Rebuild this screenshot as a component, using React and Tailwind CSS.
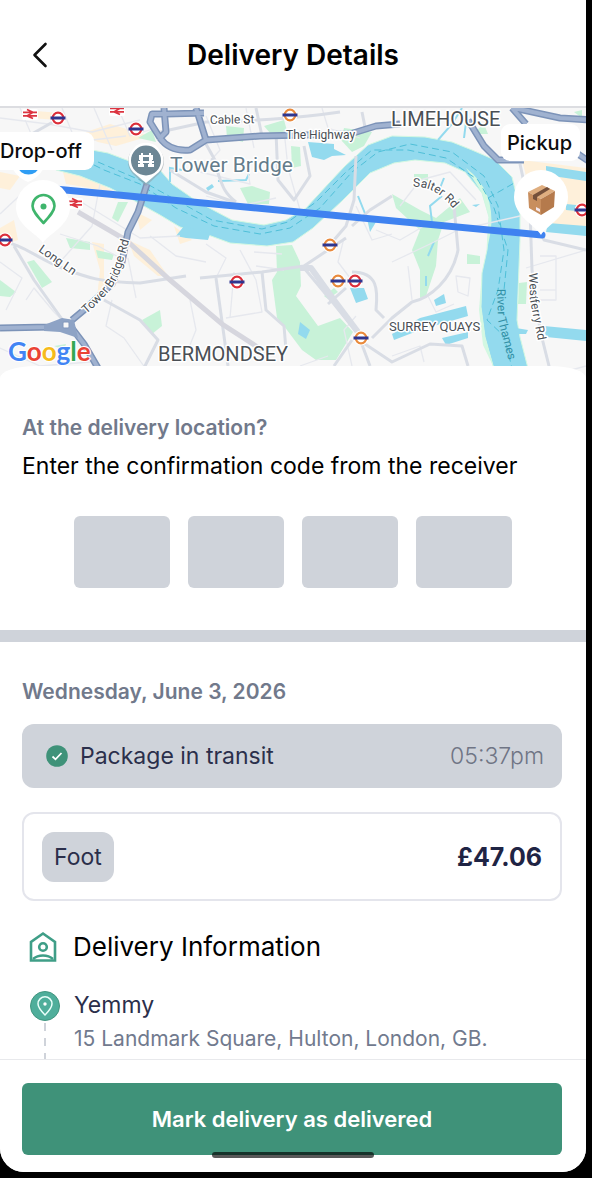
import React from "react";

const ROADS_MINOR = [
  "M0 118 L48 124 L92 132 L140 120",
  "M20 108 L38 150",
  "M62 108 L76 142 L126 136",
  "M94 108 L112 150",
  "M118 108 L130 136 L156 128",
  "M0 214 L30 186 L60 196",
  "M78 200 L140 238 L180 236",
  "M100 184 L92 226 L60 262",
  "M60 234 L98 246 L124 260",
  "M0 262 L22 278 L6 310",
  "M26 300 L34 288 L54 312 L72 330",
  "M0 348 L40 366 L90 362",
  "M150 236 L176 256 L206 262",
  "M128 258 L136 298",
  "M112 300 L106 326 L124 338 L148 372",
  "M190 300 L196 330 L188 350",
  "M206 244 L226 258 L216 278",
  "M240 250 L256 280 L262 312 L226 318",
  "M234 272 L230 318",
  "M254 252 L282 254 M256 266 L284 270",
  "M206 116 L220 150 L204 168",
  "M246 108 L254 148",
  "M284 130 L288 168 L300 210",
  "M200 172 L250 184 L246 160",
  "M322 108 L328 128 L360 138",
  "M206 196 L240 206 L276 198",
  "M344 238 L338 262 L350 278",
  "M356 206 L372 240 L392 234",
  "M376 230 L400 240 L424 226",
  "M392 262 L430 244 L458 230 L520 216",
  "M400 206 L420 180 L450 172 L476 200",
  "M408 266 L412 300",
  "M428 296 L436 312 L454 304",
  "M456 276 L470 278 L468 296 L458 292 Z",
  "M540 256 L556 256 L556 300 L540 300",
  "M540 290 L556 290",
  "M392 356 L420 346 L424 362",
  "M564 372 L586 366",
  "M356 316 L344 330 L352 366",
  "M300 366 L328 356",
  "M526 268 L586 250",
];

const ROADS_MID = [
  "M0 242 C20 242 36 258 62 268 S100 282 140 283 L186 276",
  "M14 246 L34 280 L64 322",
  "M104 300 L140 320 L158 340 L144 368",
  "M0 152 L60 118",
  "M170 170 L206 192 L234 202",
  "M212 158 C222 180 220 190 236 202",
  "M276 132 L278 180 L294 200 L310 176 L304 146",
  "M256 108 L262 136",
  "M206 144 L216 162",
  "M362 112 L366 132",
  "M200 278 L262 272 L304 266 L346 238",
  "M216 278 L224 336 L228 366",
  "M262 272 L266 310 L284 326 L286 350",
  "M304 268 L334 304 L358 334 L370 366",
  "M328 304 L346 288 M352 272 C378 272 378 290 376 310 L384 318",
  "M372 338 L392 318 L412 302 C430 298 452 280 458 250 L454 206",
  "M334 366 L352 340",
  "M356 338 L392 362 L430 344 L462 346 L468 366",
  "M356 156 L354 200 L346 226 L334 240",
  "M392 196 L370 210 L352 226",
  "M530 210 L532 270 L540 330 L550 370",
  "M520 164 L526 192 L544 240 L586 250",
  "M340 112 C300 118 240 122 206 122 L160 132",
];

const GREENS = [
  "M276 246 L292 245 L300 262 L301 286 L296 296 L318 326 L340 318 L353 332 L336 360 L316 360 L302 350 L284 326 L277 318 L272 280 L277 272 Z",
  "M240 188 L252 186 L270 192 L269 204 L248 204 Z",
  "M291 146 L300 147 L301 166 L292 168 Z",
  "M226 126 L244 128 L243 142 L227 138 Z",
  "M264 126 L284 120 L288 134 L276 140 Z",
  "M341 140 L344 128 L372 132 L364 146 L352 152 Z",
  "M392 194 L420 210 L436 218 L460 198 L470 212 L444 222 L438 240 L436 266 L426 296 L420 298 L420 270 L412 250 L420 230 L396 208 Z",
  "M414 174 L428 174 L428 182 L414 184 Z",
  "M142 320 L160 310 L162 326 L152 334 Z",
  "M27 262 L34 260 L52 282 L42 288 Z",
  "M0 280 L16 292 L10 297 L0 296 Z",
  "M66 238 L90 242 L90 250 L70 248 Z",
  "M96 250 L114 254 L112 260 L98 258 Z",
  "M118 202 L128 202 L118 222 L112 218 Z",
  "M138 138 L152 130 L156 142 Z",
  "M467 254 L480 256 L480 264 L467 264 Z",
  "M519 283 L527 282 L526 304 L518 304 Z",
  "M324 296 L334 288 L338 292 L328 299 Z",
  "M54 346 L66 344 L64 350 Z",
  "M472 134 L484 124 L488 134 Z",
  "M574 112 L582 110 L582 118 Z",
];

const SANDS = [
  "M24 110 L60 113 L58 120 L30 118 Z",
  "M80 134 L110 124 L150 136 L116 146 L98 142 Z",
  "M0 172 L20 176 L10 190 L0 188 Z",
  "M0 228 L14 220 L18 240 L0 246 Z",
  "M62 168 L90 178 L118 194 L116 200 L90 188 L66 184 Z",
  "M92 242 L104 244 L104 294 L97 298 L100 270 Z",
  "M128 240 L150 250 L168 276 L158 276 L134 256 Z",
  "M174 226 L192 240 L180 244 Z",
  "M136 212 L152 220 L140 230 Z",
  "M522 160 L586 168 L586 232 L552 230 L556 190 L528 184 Z",
];

const RIVER =
  "M30 146 L92 150 L108 153 L132 162 L160 170 L172 184 L198 202 L232 220 L264 225 L286 220 L306 208 L330 182 L345 166 L368 145 L392 136 L425 137 L452 142 L472 150 L495 160 L512 177 L520 210 L520 240 L517 320 L520 337 L531 380 L497 380 L485 337 L481 307 L482 273 L487 250 L489 217 L482 193 L465 172 L445 163 L415 160 L394 163 L370 173 L343 200 L313 228 L293 242 L267 246 L230 243 L200 232 L180 227 L160 215 L133 200 L110 188 L80 176 L56 170 Z";

const WATERS = [
  "M308 142 L334 144 L334 149 L346 155 L332 156 L324 160 L312 157 Z",
  "M206 188 L212 184 L214 187 L208 191 Z",
  "M546 166 L586 172 L586 181 L546 175 Z",
  "M566 204 L586 206 L586 212 L566 210 Z",
  "M548 223 L586 226 L586 236 L546 232 Z",
  "M544 326 L586 330 L586 341 L546 337 Z",
  "M516 328 L528 330 L526 334 L516 334 Z",
  "M392 334 L420 318 L466 306 L468 316 L420 330 L394 340 Z",
  "M442 338 L468 332 L468 338 L446 345 Z",
  "M434 300 L444 294 L446 303 L436 306 Z",
  "M350 288 L364 288 L368 299 L356 303 Z",
  "M300 322 L310 330 L306 339 L298 334 Z",
  "M176 236 L184 226 L210 234 L208 240 L186 238 Z",
  "M366 214 L376 222 L370 232 Z",
  "M472 205 L480 204 L476 207 Z",
];

const STATIONS = [
  [58, 118, "#dc2f3a"],
  [136, 129, "#dc2f3a"],
  [5, 240, "#dc2f3a"],
  [237, 282, "#dc2f3a"],
  [355, 281, "#dc2f3a"],
  [582, 210, "#dc2f3a"],
  [290, 115, "#e98a3c"],
  [330, 245, "#e98a3c"],
  [338, 281, "#e98a3c"],
  [361, 338, "#e98a3c"],
];

const RAILS = [
  [30, 114],
  [117, 110],
  [75, 203],
];

function MapLabel({ children, size = 12, color = "#4a4f55", ...rest }) {
  return (
    <text
      fontSize={size}
      fill={color}
      stroke="#fff"
      strokeWidth="3"
      strokeLinejoin="round"
      paintOrder="stroke"
      {...rest}
    >
      {children}
    </text>
  );
}

function RouteMap() {
  return (
    <svg
      viewBox="0 108 586 270"
      preserveAspectRatio="xMidYMid slice"
      className="block h-[270px] w-full bg-[#f7f7f7] font-['Roboto',sans-serif]"
      role="img"
      aria-label="Route from pickup to drop-off"
    >
      {SANDS.map((d) => (
        <path key={d} d={d} fill="#fef0da" />
      ))}
      {GREENS.map((d) => (
        <path key={d} d={d} fill="#c8f2d8" />
      ))}
      <path d={RIVER} fill="#93daee" stroke="#d3f8e2" strokeWidth="1" />
      <path d="M466 168 Q495 190 491 230 L487 250 L489 217 L482 193 Z" fill="#d3f8e2" />
      <path d="M482 272 L479 310 L483 345 L494 368 L485 337 L481 307 Z" fill="#d3f8e2" />
      {WATERS.map((d) => (
        <path key={d} d={d} fill="#93daee" />
      ))}
      <g fill="none" stroke="#93daee" strokeWidth="2">
        <path d="M170 182 L170 168 L182 170 M218 181 L246 180 L249 174 M358 196 L366 216 M438 140 L452 124 L462 108 M464 138 L466 122" />
        <path d="M428 256 L434 242 M426 276 L426 286 M432 222 L430 206 L442 196 M440 188 L444 178" />
      </g>
      <g fill="none" stroke="#4fbfd8" strokeWidth="1" strokeDasharray="7 4">
        <path d="M84 160 L104 170 L140 184 L176 208 L214 226 L260 234 L290 228 L320 208 L352 172 L378 152 L410 144 L452 152 L484 176 L498 206 L504 250 L498 290 L487 320 L504 336 L514 376" />
        <path d="M98 162 L140 180 L176 200 L212 220 L262 229 L288 222 L316 202 L346 172 L372 150 L408 150 L446 158 L478 180 L494 208 L508 250 L504 290 M488 198 L516 182" />
      </g>
      <g fill="none" stroke="#e6e8ee" strokeWidth="1.3" strokeLinejoin="round">
        {ROADS_MINOR.map((d) => (
          <path key={d} d={d} />
        ))}
      </g>
      <g fill="none" stroke="#d9dde5" strokeWidth="3" strokeLinejoin="round">
        {ROADS_MID.map((d) => (
          <path key={d} d={d} />
        ))}
      </g>
      <path d="M78 212 L126 240 L170 280 L222 324 L262 350" fill="none" stroke="#d6d6de" strokeWidth="5" />
      <path d="M300 268 L311 268 L334 300 L358 332" fill="none" stroke="#d9dde5" strokeWidth="6" strokeLinejoin="round" />

      {[
        ["#7c93b8", 7],
        ["#a0b2d0", 4],
      ].map(([color, width]) => (
        <g key={color} fill="none" stroke={color} strokeWidth={width} strokeLinejoin="round">
          <path d="M160 138 L150 122 L152 114 L166 114 L204 113 M164 108 L166 132 L160 138 M160 138 Q170 152 190 150 L206 140 L260 136 L350 134 L376 126 L400 124 M196 108 L206 140" />
          <path d="M147 184 L138 212 L128 232 L122 262 L112 284 L84 310 L72 320" />
          <path d="M0 328 L50 327 L68 323 L84 344 L98 368" />
          <path d="M468 120 L484 146 L498 160 L524 160 M512 108 L526 124 M514 108 L560 118 L592 120 M572 150 L590 162" />
        </g>
      ))}
      <path d="M44 325 L62 318 L74 320 L78 338 L60 332 L44 331 Z" fill="#8ea3c5" />
      <rect x="63" y="322" width="6" height="6" rx="1" fill="#f7f7f7" stroke="#8197bb" strokeWidth="1" />

      {RAILS.map(([x, y]) => (
        <g key={x} transform={`translate(${x} ${y})`}>
          <rect x="-8" y="-5" width="16" height="11" rx="2" fill="#fff" />
          <path d="M-7 -1.600 H7 M-7 1.800 H7 M-3 -4.500 L3 -1.600 L-3 1.800 L3 4.500" fill="none" stroke="#dc3440" strokeWidth="1.700" />
        </g>
      ))}
      {STATIONS.map(([x, y, color]) => (
        <g key={`${x}-${y}`} transform={`translate(${x} ${y})`}>
          <circle r="7.500" fill="#fff" />
          <circle r="5.300" fill="#fff" stroke={color} strokeWidth="2.200" />
          <rect x="-7.500" y="-1.500" width="15" height="3" fill="#30368f" />
        </g>
      ))}

      <MapLabel x="210" y="124" transform="rotate(-1 210 124)">Cable St</MapLabel>
      <MapLabel x="286" y="139">The Highway</MapLabel>
      <MapLabel x="391" y="126" size={20}>LIMEHOUSE</MapLabel>
      <MapLabel x="158" y="361" size={20}>BERMONDSEY</MapLabel>
      <MapLabel x="389" y="331" size={13}>SURREY QUAYS</MapLabel>
      <MapLabel x="170" y="172" size={21} color="#647c8b">Tower Bridge</MapLabel>
      <MapLabel x="38" y="251" transform="rotate(35 38 251)">Long Ln</MapLabel>
      <MapLabel>
        <textPath href="#tower-bridge-road">Tower Bridge Rd</textPath>
      </MapLabel>
      <MapLabel>
        <textPath href="#salter-road">Salter Rd</textPath>
      </MapLabel>
      <MapLabel>
        <textPath href="#westferry-road">Westferry Rd</textPath>
      </MapLabel>
      <text fontSize="12" fill="#3290a5">
        <textPath href="#river-name">River Thames</textPath>
      </text>
      <defs>
        <path id="tower-bridge-road" d="M86 314 Q114 290 120 272 L132 230" />
        <path id="salter-road" d="M413 187 Q436 185 456 212" />
        <path id="westferry-road" d="M529 273 L530 300 L540 350" />
        <path id="river-name" d="M497 289 L498 320 L511 370" />
      </defs>

      <path d="M12 168 Q18 178 28 182 Q38 178 44 168 Z" fill="#fff" />
      <path d="M17 166 A12 12 0 0 0 40 166 Z" fill="#2f9df4" />

      <path d="M146 186 L133 174 A18 18 0 1 1 159 174 Z" fill="#8b979e" opacity=".5" />
      <path d="M146 183 L133 172 A17.500 17.500 0 1 1 159 172 Z" fill="#fff" />
      <circle cx="146" cy="160.500" r="15" fill="#6d8795" />
      <g fill="#fff">
        <path d="M139 155 h2 v-2 h2 v2 h6 v-2 h2 v2 h2 v5 h-3 v-2 h-1 v-1 h-6 v1 h-1 v2 h-3 Z" />
        <path d="M140 158 h3 v9 h-3 Z M149 158 h3 v9 h-3 Z M138 161 h16 v2 h-16 Z M138 164 h6 v3 h-6 Z M148 164 h6 v3 h-6 Z" />
      </g>

      <path d="M44 188 L542 235" stroke="#3f82f0" strokeWidth="7" strokeLinecap="round" />

      <g fill="#fff">
        <path d="M43 243 C38 234 16 226 16 207 A27 27 0 0 1 70 207 C70 226 48 234 43 243 Z" />
        <path d="M541 235 C536 226 514 216 514 197 A27 27 0 0 1 568 197 C568 216 546 226 541 235 Z" />
        <rect x="-14" y="132" width="108" height="38" rx="9" />
        <rect x="501" y="124" width="79" height="37" rx="9" />
      </g>
      <path
        d="M43.500 223 C37 216 32.500 211 32.500 206 A11 11 0 0 1 54.500 206 C54.500 211 50 216 43.500 223 Z"
        fill="none"
        stroke="#3fb56c"
        strokeWidth="2.600"
        strokeLinejoin="round"
      />
      <circle cx="43.500" cy="206.500" r="3" fill="#3fb56c" />

      <g>
        <path d="M528 192 L542 185 L555 191 L541 199 Z" fill="#dfae80" />
        <path d="M528 192 L541 199 V215 L529 208 Z" fill="#c88e5e" />
        <path d="M541 199 L555 191 L554 207 L541 215 Z" fill="#b57a4c" />
        <path d="M533 199 L533 195 L547 187 L550 189 L537 197 V201 Z" fill="#74503b" />
        <path d="M536 207 L540 209 V212 L536 210 Z" fill="#f4e8ee" />
      </g>
      <g fill="#0c0c0c" fontSize="20" fontWeight="500" className="font-['Inter',sans-serif]">
        <text x="0" y="158">Drop-off</text>
        <text x="507" y="150">Pickup</text>
      </g>
      <text
        x="8"
        y="361"
        fontSize="26"
        fontWeight="700"
        stroke="#fff"
        strokeWidth="2"
        paintOrder="stroke"
        className="font-['Lato',sans-serif]"
      >
        <tspan fill="#4285f4">G</tspan>
        <tspan fill="#ea4335">o</tspan>
        <tspan fill="#f6bb1c">o</tspan>
        <tspan fill="#4285f4">g</tspan>
        <tspan fill="#34a853">l</tspan>
        <tspan fill="#ea4335">e</tspan>
      </text>
    </svg>
  );
}

function CheckBadge() {
  return (
    <svg viewBox="0 0 22 22" className="size-[22px]" aria-hidden="true">
      <circle cx="11" cy="11" r="10.800" fill="#3f9279" />
      <path d="M6.500 11.500 L9.500 14.300 L15.500 8" fill="none" stroke="#fff" strokeWidth="1.800" />
    </svg>
  );
}

function HousePersonIcon() {
  return (
    <svg viewBox="0 0 28 32" className="h-8 w-7" fill="none" stroke="#3f9e87" strokeWidth="2.600" aria-hidden="true">
      <path d="M2 29.500 V11 L14 2.500 L26 11 V29.500 Z" />
      <circle cx="14" cy="16" r="3.800" />
      <path d="M4 28 Q8 24.500 14 24.500 T24 28" />
    </svg>
  );
}

function StopIcon() {
  return (
    <svg viewBox="0 0 30 30" className="size-[30px] shrink-0" fill="none" aria-hidden="true">
      <circle cx="15" cy="15" r="14.500" fill="#4fae9b" stroke="#41957f" />
      <path
        d="M15 24 C11.500 20.500 8 16.500 8 12.800 A7 7 0 0 1 22 12.800 C22 16.500 18.500 20.500 15 24 Z"
        stroke="#e9fffa"
        strokeWidth="1.500"
      />
      <circle cx="15" cy="13" r="1.700" fill="#fff" />
    </svg>
  );
}

export default function App() {
  return (
    <div className="h-screen bg-black pr-1.5 pb-1.5 font-['Inter',sans-serif]">
      <div className="relative flex h-full flex-col overflow-hidden rounded-b-3xl bg-white">
        <header className="grid h-[108px] shrink-0 grid-cols-[1fr_auto_1fr] items-center border-b-2 border-[#dcdde1] px-6 pt-1">
          <button type="button" aria-label="Back" className="flex size-8 items-center justify-center">
            <svg viewBox="0 0 16 28" className="h-7 w-4" fill="none" aria-hidden="true">
              <path d="M13.500 3 L2.500 14 L13.500 25" stroke="#111" strokeWidth="2.600" strokeLinecap="round" strokeLinejoin="round" />
            </svg>
          </button>
          <h1 className="text-[28px] leading-8 font-semibold text-black">Delivery Details</h1>
        </header>

        <main className="min-h-0 flex-1 overflow-y-auto [scrollbar-width:none]">
          <RouteMap />

          <section className="relative -mt-3 rounded-t-[36px_12px] bg-white px-[22px] pt-12 pb-[42px]">
            <h2 className="text-[21px] leading-7 font-semibold text-[#71798b]">At the delivery location?</h2>
            <p id="code-hint" className="mt-2 text-[23px] leading-8 text-black">
              Enter the confirmation code from the receiver
            </p>
            <div role="group" aria-labelledby="code-hint" className="mt-[34px] flex justify-center gap-[18px]">
              {[1, 2, 3, 4].map((digit) => (
                <input
                  key={digit}
                  type="text"
                  inputMode="numeric"
                  maxLength={1}
                  aria-label={`Code digit ${digit}`}
                  className="h-[72px] w-24 rounded-md bg-[#cfd3da] text-center text-3xl"
                />
              ))}
            </div>
          </section>

          <div className="h-3 bg-[#cfd3da]" />

          <section className="pt-9 pr-6 pl-[22px]">
            <h2 className="text-[21px] leading-7 font-semibold text-[#71798b]">Wednesday, June 3, 2026</h2>

            <div className="mt-[18px] flex h-16 items-center justify-between rounded-xl bg-[#cfd3da] pr-[18px] pl-6">
              <div className="flex items-center gap-3">
                <CheckBadge />
                <span className="text-[23px] leading-8 text-[#2b2f4b]">Package in transit</span>
              </div>
              <time className="text-[23px] leading-8 font-light text-[#6f7585]">05:37pm</time>
            </div>

            <div className="mt-6 flex h-[89px] items-center justify-between rounded-xl border-2 border-[#e4e5ec] px-[18px]">
              <span className="rounded-xl bg-[#cfd3da] px-3 py-[9px] text-[23px] leading-8 text-[#2b2f4b]">Foot</span>
              <span className="text-[25px] leading-8 font-bold text-[#1f2444]">£47.06</span>
            </div>

            <div className="mt-7 flex items-center gap-4 pl-[7px]">
              <HousePersonIcon />
              <h2 className="text-[26px] leading-9 text-black">Delivery Information</h2>
            </div>

            <div className="mt-[26px] flex gap-3.5 pl-2">
              <div className="flex flex-col items-center">
                <StopIcon />
                <div className="mt-0.5 h-[100px] w-0.5 bg-[repeating-linear-gradient(to_bottom,#cfd3da_0_8px,transparent_8px_15px)]" />
              </div>
              <div>
                <h3 className="text-[23px] leading-7 text-[#2b2f4b]">Yemmy</h3>
                <p className="mt-1 text-[21px] leading-8 text-[#717a8e]">15 Landmark Square, Hulton, London, GB.</p>
              </div>
            </div>
          </section>
        </main>

        <footer className="relative shrink-0 border-t border-[#e8e9ec] bg-white pt-[23px] pr-6 pb-[17px] pl-[22px]">
          <button type="button" className="h-[72px] w-full rounded-md bg-[#3f9279] text-[22px] leading-8 font-semibold text-white">
            Mark delivery as delivered
          </button>
          <div className="absolute bottom-3.5 left-1/2 h-1.5 w-[162px] -translate-x-1/2 rounded-full bg-black/65" />
        </footer>
      </div>
    </div>
  );
}
